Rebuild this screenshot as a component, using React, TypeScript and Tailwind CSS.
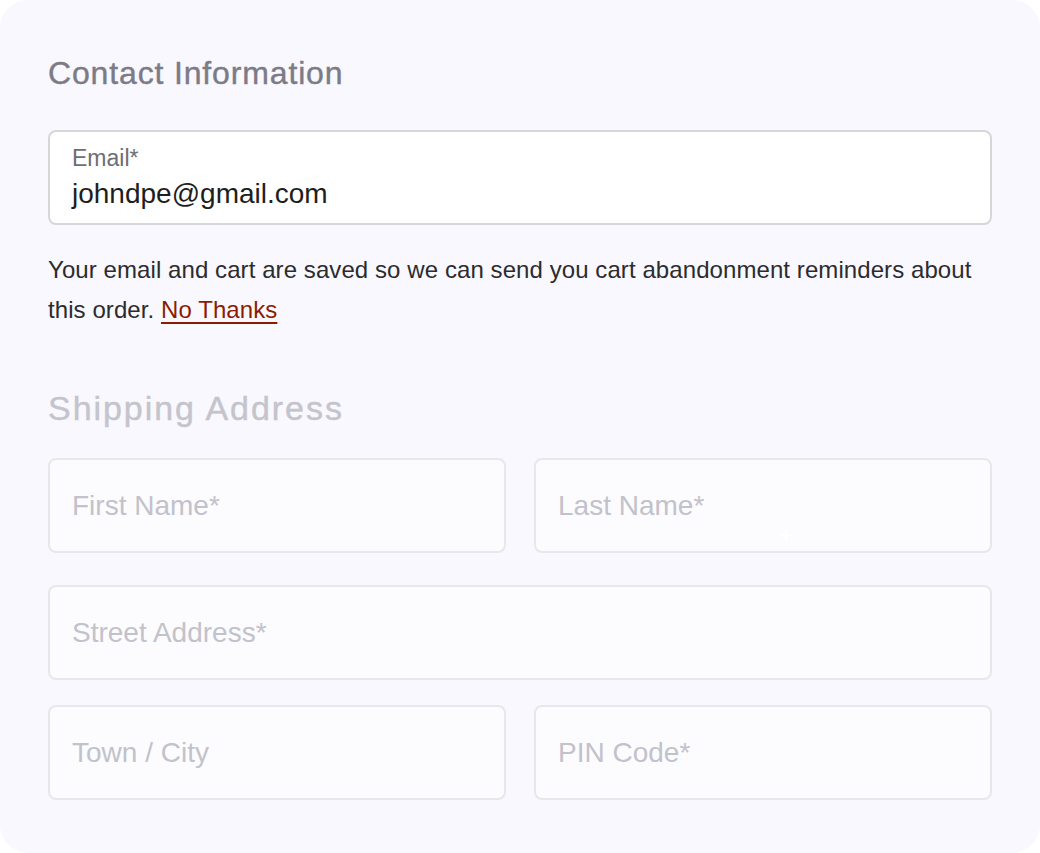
import React from "react";

const font = { fontFamily: "'Liberation Sans', Arial, sans-serif" };

function Field({ placeholder, extra }: { placeholder: string; extra?: React.ReactNode }) {
  return (
    <div className="relative flex h-[95px] items-center rounded-[8px] border-2 border-[#e7e7ec] bg-[#fcfcff] px-[22px]">
      <span className="text-[28px] leading-[34px] text-[#c2c2ca]">{placeholder}</span>
      {extra}
    </div>
  );
}

export default function App() {
  return (
    <div className="h-[853px] w-[1040px] bg-white" style={font}>
      <div className="flex h-[853px] w-[1040px] flex-col rounded-[28px] bg-[#f8f8fe] px-[48px] pt-[54px]">
        <h2 className="text-[32px] leading-[38px] tracking-[0.85px] text-[#7c7b86] [-webkit-text-stroke:0.4px_#7c7b86]">
          Contact Information
        </h2>
        <div className="mt-[38px] flex h-[95px] flex-col rounded-[8px] border-2 border-[#d6d6db] bg-white px-[22px] pt-[14px]">
          <span className="text-[23px] leading-[24px] text-[#6e6e74]">Email*</span>
          <span className="mt-[7px] text-[28px] leading-[34px] text-[#1e1e20]">johndpe@gmail.com</span>
        </div>
        <p className="mt-[25px] text-[24px] leading-[40px] tracking-[0.08px] text-[#2c2c2e]">
          Your email and cart are saved so we can send you cart abandonment reminders about this order.{" "}
          <a className="text-[#8e1b00] underline decoration-[1.5px] underline-offset-[4px]">No Thanks</a>
        </p>
        <h2 className="mt-[59px] text-[34px] leading-[38px] tracking-[1.95px] text-[#c4c4cc] [-webkit-text-stroke:0.4px_#c4c4cc]">
          Shipping Address
        </h2>
        <div className="mt-[31px] grid grid-cols-2 gap-[28px]">
          <Field placeholder="First Name*" />
          <Field
            placeholder="Last Name*"
            extra={
              <svg className="absolute left-[244px] top-[69px]" width="12" height="12" viewBox="0 0 12 12">
                <path d="M6 0v12M0 6h12" stroke="#ffffff" strokeWidth="1.5" />
              </svg>
            }
          />
        </div>
        <div className="mt-[32px]">
          <Field placeholder="Street Address*" />
        </div>
        <div className="mt-[25px] grid grid-cols-2 gap-[28px]">
          <Field placeholder="Town / City" />
          <Field placeholder="PIN Code*" />
        </div>
      </div>
    </div>
  );
}
